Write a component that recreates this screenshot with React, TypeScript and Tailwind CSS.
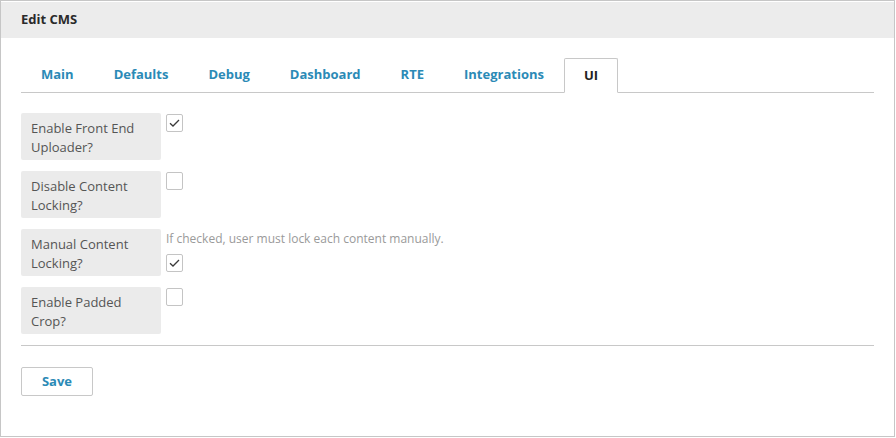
import React from "react";

const rows = [
  { label: ["Enable Front End", "Uploader?"], checked: true },
  { label: ["Disable Content", "Locking?"], checked: false },
  { label: ["Manual Content", "Locking?"], checked: true, help: "If checked, user must lock each content manually." },
  { label: ["Enable Padded", "Crop?"], checked: false },
];

const tabs = ["Main", "Defaults", "Debug", "Dashboard", "RTE", "Integrations", "UI"];

function Box({ checked }: { checked: boolean }) {
  return (
    <div className="w-[17px] h-[18px] border border-[#c4c4c4] rounded-[2px] bg-white flex items-center justify-center">
      {checked && (
        <svg width="13" height="12" viewBox="0 0 13 12">
          <path d="M2 6.2 L5 9 L11 3" fill="none" stroke="#3a3a3a" strokeWidth="1.3" />
        </svg>
      )}
    </div>
  );
}

export default function App() {
  return (
    <div className="w-[896px] h-[438px] bg-white" style={{ fontFamily: '"Open Sans", sans-serif' }}>
      <div className="w-[895px] h-[437px] border border-[#c6c6c6] flex flex-col">
        <div className="h-[36px] mt-[1px] bg-[#ececec] px-[20px] flex items-center text-[13px] font-bold text-[#2a2a2a]">
          Edit CMS
        </div>
        <div className="px-[20px]">
          <div className="mt-[20px] flex border-b border-[#c8c8c8]">
            {tabs.map((t) => (
              <div
                key={t}
                className={
                  t === "UI"
                    ? "h-[35px] px-[19px] -mb-px flex items-center text-[13px] font-bold text-[#222] bg-white border border-[#c8c8c8] border-b-white rounded-t-[2px]"
                    : "h-[34px] px-[20px] flex items-center text-[13px] font-bold text-[#2b8ab6]"
                }
              >
                {t}
              </div>
            ))}
          </div>
          <div className="mt-[20px] flex flex-col gap-[11px]">
            {rows.map((r, i) => (
              <div key={i} className="flex">
                <div className="w-[140px] h-[47px] bg-[#ebebeb] rounded-[2px] pl-[10px] pt-[6px] text-[13px] leading-[19px] text-[#555]">
                  {r.label[0]}
                  <br />
                  {r.label[1]}
                </div>
                <div className="ml-[5px] flex flex-col">
                  {r.help ? (
                    <>
                      <div className="mt-[1px] text-[12px] leading-[17px] text-[#9a9a9a]">{r.help}</div>
                      <div className="mt-[7px]">
                        <Box checked={r.checked} />
                      </div>
                    </>
                  ) : (
                    <div className="mt-[1px]">
                      <Box checked={r.checked} />
                    </div>
                  )}
                </div>
              </div>
            ))}
          </div>
          <div className="mt-[11px] border-t border-[#c8c8c8]" />
          <button className="mt-[21px] w-[72px] h-[29px] border border-[#c8c8c8] rounded-[2px] bg-white text-[13px] font-bold text-[#2b8ab6] flex items-center justify-center">
            Save
          </button>
        </div>
      </div>
    </div>
  );
}
